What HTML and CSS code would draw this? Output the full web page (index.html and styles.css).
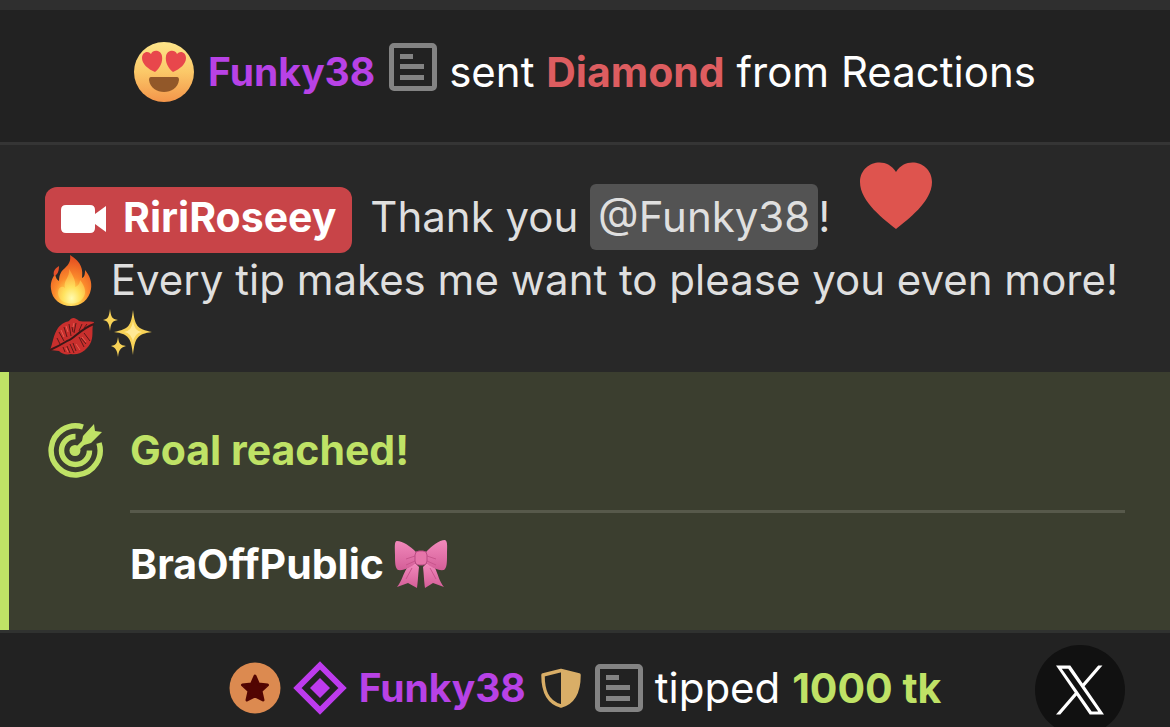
FILE: index.html
```
<!DOCTYPE html>
<html lang="en">
<head>
    <meta charset="UTF-8">
    <meta name="viewport" content="width=device-width, initial-scale=1.0">
    <title>Chat</title>
    <link rel="stylesheet" href="styles.css">
</head>
<body>
    <main class="chat">
        <!-- Reaction notice -->
        <div class="notice notice-reaction">
            <svg class="emoji-face" viewBox="0 0 60 60" aria-hidden="true">
                <defs>
                    <linearGradient id="face" x1="0" y1="0" x2="0" y2="1">
                        <stop offset="0" stop-color="#fde58a"/>
                        <stop offset=".5" stop-color="#fbc868"/>
                        <stop offset="1" stop-color="#f3954a"/>
                    </linearGradient>
                </defs>
                <circle cx="30" cy="30" r="30" fill="url(#face)"/>
                <path fill="#e8474c" d="M21 30C14 27 8 22 8 16C8 10 14 8 17 12C19 7 27 8 28 14C29 20 26 26 21 30Z"/>
                <path fill="#e8474c" d="M39 30C46 27 52 22 52 16C52 10 46 8 43 12C41 7 33 8 32 14C31 20 34 26 39 30Z"/>
                <path fill="#925829" d="M17 35H43Q45 35 45 38C44 46 37 50 30 50S16 46 15 38Q15 35 17 35Z"/>
            </svg>
            <a class="user" href="#">Funky38</a>
            <button class="note" type="button" aria-label="Add note">
                <svg viewBox="0 0 48 48"><rect x="2.5" y="2.5" width="43" height="43" rx="2.5" fill="none" stroke="#838383" stroke-width="5"/><path fill="#838383" d="M11 11h13v5H11zM11 21h24v5H11zM11 32h24v5H11z"/></svg>
            </button>
            <span>sent <b class="gift">Diamond</b> from Reactions</span>
        </div>

        <!-- Broadcaster message -->
        <p class="message">
            <a class="model" href="#"><svg viewBox="0 0 46 30" aria-hidden="true"><path fill="#fff" d="M5 1H29Q34 1 34 6V10L45 2V28L34 20V24Q34 29 29 29H5Q0 29 0 24V6Q0 1 5 1Z"/></svg>RiriRoseey</a>
            <span class="thanks">Thank you</span> <a class="mention" href="#">@Funky38</a>!<svg class="heart" viewBox="0 0 72 72" role="img" aria-label="heart"><path fill="#de544e" d="M36 69C25 60 0 42 0 22C0 2 26-5 36 12C46-5 72 2 72 22C72 42 47 60 36 69Z"/></svg><br>
            <svg class="emoji" viewBox="0 0 54 54" role="img" aria-label="fire">
                <defs>
                    <radialGradient id="flame" cx=".5" cy=".85" r=".85">
                        <stop offset="0" stop-color="#fff38a"/>
                        <stop offset=".25" stop-color="#ffcf4a"/>
                        <stop offset=".5" stop-color="#fb8a2c"/>
                        <stop offset="1" stop-color="#e2451f"/>
                    </radialGradient>
                    <radialGradient id="core" cx=".5" cy=".85" r=".8">
                        <stop offset="0" stop-color="#fffbb0"/>
                        <stop offset=".4" stop-color="#ffe25e"/>
                        <stop offset="1" stop-color="#fd9a35"/>
                    </radialGradient>
                </defs>
                <path fill="url(#flame)" d="M25 2C37 9 38 17 37 25C40 24 40 20 40 17C45 23 47 29 46 36C44 47 36 53 26 53C15 53 7 46 6 36C5 29 8 24 10 21C11 25 12 27 14 28C14 22 16 18 20 15C24 11 26 8 25 2Z"/>
                <path fill="#e5502a" d="M14 13C9 16 8 19 9 23C13 22 14 17 14 13Z"/>
                <path fill="url(#core)" d="M24 16C29 24 31 29 30 34C34 33 35 29 35 27C40 33 42 40 38 45C33 53 17 52 14 44C11 37 16 31 20 35C18 27 25 25 24 16Z"/>
            </svg>
            Every tip makes me want to please you even more!
            <svg class="emoji" viewBox="0 0 54 54" role="img" aria-label="kiss mark">
                <path fill="#c92f2d" d="M5 43C8 36 8 28 13 21C17 16 21 15 24 14C27 9 31 11 34 14C39 15 44 14 49 15C46 22 49 27 46 35C43 42 35 49 26 47C21 48 17 47 14 44Z"/>
                <path fill="none" stroke="#3a1818" stroke-width="2" d="M5 43C14 39 17 37 22 34C28 33 35 22 49 17"/>
                <path fill="none" stroke="#5c1918" d="M14 25l5 9M19 20l3 10M24 17l2 12M31 16l-2 10M37 17l-3 7M12 31l3 6M22 39l3 7M28 36l3 8M34 30l5 10M39 26l6 8M18 40l2 5M42 17l-3 4M27 20l1 5M25 37l4 9M36 31l5 6"/>
                <path fill="none" stroke="#e85c50" d="M16 23l3 7M21 19l2 6M29 16l-1 4M31 37l4 6M37 30l4 5M21 41l2 4"/>
            </svg><svg class="emoji" viewBox="0 0 54 54" role="img" aria-label="sparkles">
                <path fill="#f7d257" d="M34 3C36 19 38 22 53 25C38 27 36 31 34 48C32 31 30 27 15 25C30 22 32 19 34 3Z"/>
                <path fill="#f7d257" d="M11 2C12 10 13 12 19 13C13 14 12 16 11 24C10 16 9 14 4 13C9 12 10 10 11 2ZM19 30C20 37 21 38 27 39C21 41 20 43 19 50C18 43 17 41 12 39C17 38 18 37 19 30Z"/>
                <path fill="#ffe995" d="M34 14Q35 24 43 25Q35 26 34 36Q33 26 25 25Q33 24 34 14Z"/>
            </svg>
        </p>

        <!-- Goal reached -->
        <section class="goal">
            <svg class="goal-icon" viewBox="0 0 55 55" aria-hidden="true">
                <g fill="none" stroke="#bfe266" stroke-width="5.5">
                    <path d="M35 4A24.500 24.500 0 1 0 51 20"/>
                    <path d="M27.500 13.500A14 14 0 1 0 41.500 27.500"/>
                    <path stroke-width="4.5" d="M27 28L39 16"/>
                </g>
                <circle cx="27" cy="27.5" r="5.5" fill="#bfe266"/>
                <path fill="#bfe266" d="M35 13L46 1L47 8L54 9L43 20L33 23Z"/>
            </svg>
            <div class="goal-body">
                <h2 class="goal-title">Goal reached!</h2>
                <p class="goal-text">BraOffPublic
                    <svg class="bow" viewBox="0 0 54 48" role="img" aria-label="ribbon">
                        <defs>
                            <linearGradient id="ribbon" x1="0" y1="0" x2="0" y2="1">
                                <stop offset="0" stop-color="#f28abc"/>
                                <stop offset="1" stop-color="#d45e98"/>
                            </linearGradient>
                        </defs>
                        <path fill="url(#ribbon)" d="M21 23L25 27C24 36 24 41 23 48L14 43L3 47C8 41 9 34 13 28ZM33 23L29 27C30 36 30 41 31 48L39 43L50 47C45 41 44 34 41 28Z"/>
                        <path fill="url(#ribbon)" d="M22 12C16 6 9 1 3 1C0 1 1 8 1 15S1 28 4 30C10 31 17 27 22 23ZM32 12C38 6 45 0 51 0C54 1 53 8 53 15S53 28 50 30C44 31 37 27 32 23Z"/>
                        <path fill="none" stroke="#c9558d" d="M12 19L21 16M12 25L21 21M42 19L33 16M42 25L33 21M18 28L12 39M36 28L42 39"/>
                        <rect x="21" y="11" width="12" height="14" rx="4" fill="#e675aa" stroke="#b94b83"/>
                    </svg>
                </p>
            </div>
        </section>

        <!-- Tip notice -->
        <div class="notice notice-tip">
            <svg class="badge-star" viewBox="0 0 52 52" aria-hidden="true"><circle cx="26" cy="26" r="25.5" fill="#dc8a50"/><path fill="#520502" stroke="#520502" stroke-width="3" stroke-linejoin="round" d="M26 14L29.500 22L38.500 23L32 29L34 38L26 34L18 38L20 29L13.500 23L22.500 22Z"/></svg>
            <svg class="badge-diamond" viewBox="0 0 54 54" aria-hidden="true"><path fill="none" stroke="#bd3bee" stroke-width="6" d="M27 4.500L49.500 27L27 49.500L4.500 27Z"/><path fill="#bd3bee" d="M27 17L37 27L27 37L17 27Z"/></svg>
            <a class="user" href="#">Funky38</a>
            <svg class="badge-shield" viewBox="0 0 40 40" aria-hidden="true"><path fill="none" stroke="#d9ae67" stroke-width="3.5" stroke-linejoin="round" d="M20 2.500L38 7C38 21 35 34 20 38C5 34 2 21 2 7Z"/><path fill="#d9ae67" d="M20 2L38 7C38 21 35 34 20 38Z"/></svg>
            <button class="note" type="button" aria-label="Add note">
                <svg viewBox="0 0 48 48"><rect x="2.5" y="2.5" width="43" height="43" rx="2.5" fill="none" stroke="#838383" stroke-width="5"/><path fill="#838383" d="M11 11h13v5H11zM11 21h24v5H11zM11 32h24v5H11z"/></svg>
            </button>
            <span>tipped <b class="amount">1000 tk</b></span>
        </div>

        <a class="share" href="#" aria-label="X">
            <svg viewBox="0 0 1200 1227"><path fill="#fff" d="M714.163 519.284L1160.890 0H1055.030L667.137 450.887L357.328 0H0L468.492 681.821L0 1226.370H105.866L515.491 750.218L842.672 1226.370H1200L714.137 519.284ZM569.165 687.828L521.697 619.934L144.011 79.694H306.615L611.412 515.685L658.880 583.579L1055.080 1150.300H892.476L569.165 687.854Z"/></svg>
        </a>
    </main>
</body>
</html>
```
FILE: styles.css
```
* {
    box-sizing: border-box;
}
body {
    margin: 0;
    background-color: #222222;
    color: #ffffff;
    font-family: Inter, "Liberation Sans", sans-serif;
    font-size: 42px;
    line-height: 54px;
}
a {
    color: inherit;
    text-decoration: none;
}
.chat {
    position: relative;
    height: 100vh;
    overflow: hidden;
    border-top: 10px solid #2f2f2f;
}
.notice {
    display: flex;
    align-items: center;
    justify-content: center;
    white-space: nowrap;
    background-color: #222222;
}
.notice-reaction {
    padding: 32px 45px 40px;
    border-bottom: 3px solid #353535;
}
.notice-tip {
    padding: 28px 45px;
}
.user {
    color: #b842e6;
    font-size: 39px;
    font-weight: 700;
}
.gift {
    color: #dd5d60;
    font-size: 41px;
    font-weight: 700;
}
.amount {
    color: #bfe266;
    font-size: 41px;
    font-weight: 700;
}
.note {
    width: 48px;
    height: 48px;
    margin: 0 12px 0 14px;
    padding: 0;
    border: 0;
    background: none;
}
.note svg {
    display: block;
}
.notice-reaction .note {
    margin-bottom: 10px;
}
.emoji-face {
    width: 60px;
    height: 60px;
    margin-right: 14px;
}

/* broadcaster message */
.message {
    margin: 0;
    padding: 15px 45px 11px;
    background-color: #282828;
    color: #dfdfdf;
}
.model {
    display: inline-block;
    padding: 3px 16px 9px;
    border-radius: 12px;
    background-color: #c84448;
    color: #ffffff;
    font-size: 41px;
    font-weight: 700;
}
.model svg {
    width: 46px;
    height: 30px;
    margin-right: 16px;
    vertical-align: -2px;
}
.thanks {
    margin-left: 6px;
}
.mention {
    display: inline-block;
    padding: 6px 8px;
    border-radius: 6px;
    background-color: #535353;
}
.heart {
    width: 72px;
    height: 72px;
    margin-left: 30px;
    vertical-align: baseline;
}
.emoji {
    width: 54px;
    height: 54px;
    vertical-align: bottom;
}

/* goal */
.goal {
    display: flex;
    align-items: flex-start;
    gap: 27px;
    margin-bottom: 3px;
    padding: 51px 45px 39px 39px;
    border-left: 9px solid #bfe266;
    background-color: #3b3e2f;
    box-shadow: 0 3px 0 #303230;
}
.goal-icon {
    flex: none;
    width: 55px;
    height: 55px;
}
.goal-body {
    flex: 1;
}
.goal-title {
    margin: 0;
    padding-bottom: 33px;
    border-bottom: 3px solid #57594b;
    color: #bfe266;
    font-size: 41px;
    font-weight: 700;
}
.goal-text {
    margin: 24px 0 0;
    font-size: 41px;
    font-weight: 700;
}
.bow {
    width: 54px;
    height: 48px;
    vertical-align: -9px;
}

/* tip badges */
.badge-star {
    width: 52px;
    height: 52px;
    margin-right: 12px;
}
.badge-diamond {
    width: 54px;
    height: 54px;
    margin-right: 12px;
}
.badge-shield {
    width: 40px;
    height: 40px;
    margin-left: 15px;
}
.share {
    position: absolute;
    right: 45px;
    bottom: -8px;
    display: flex;
    align-items: center;
    justify-content: center;
    width: 90px;
    height: 90px;
    border-radius: 50%;
    background-color: #111111;
}
.share svg {
    width: 48px;
    height: 50px;
}
```
